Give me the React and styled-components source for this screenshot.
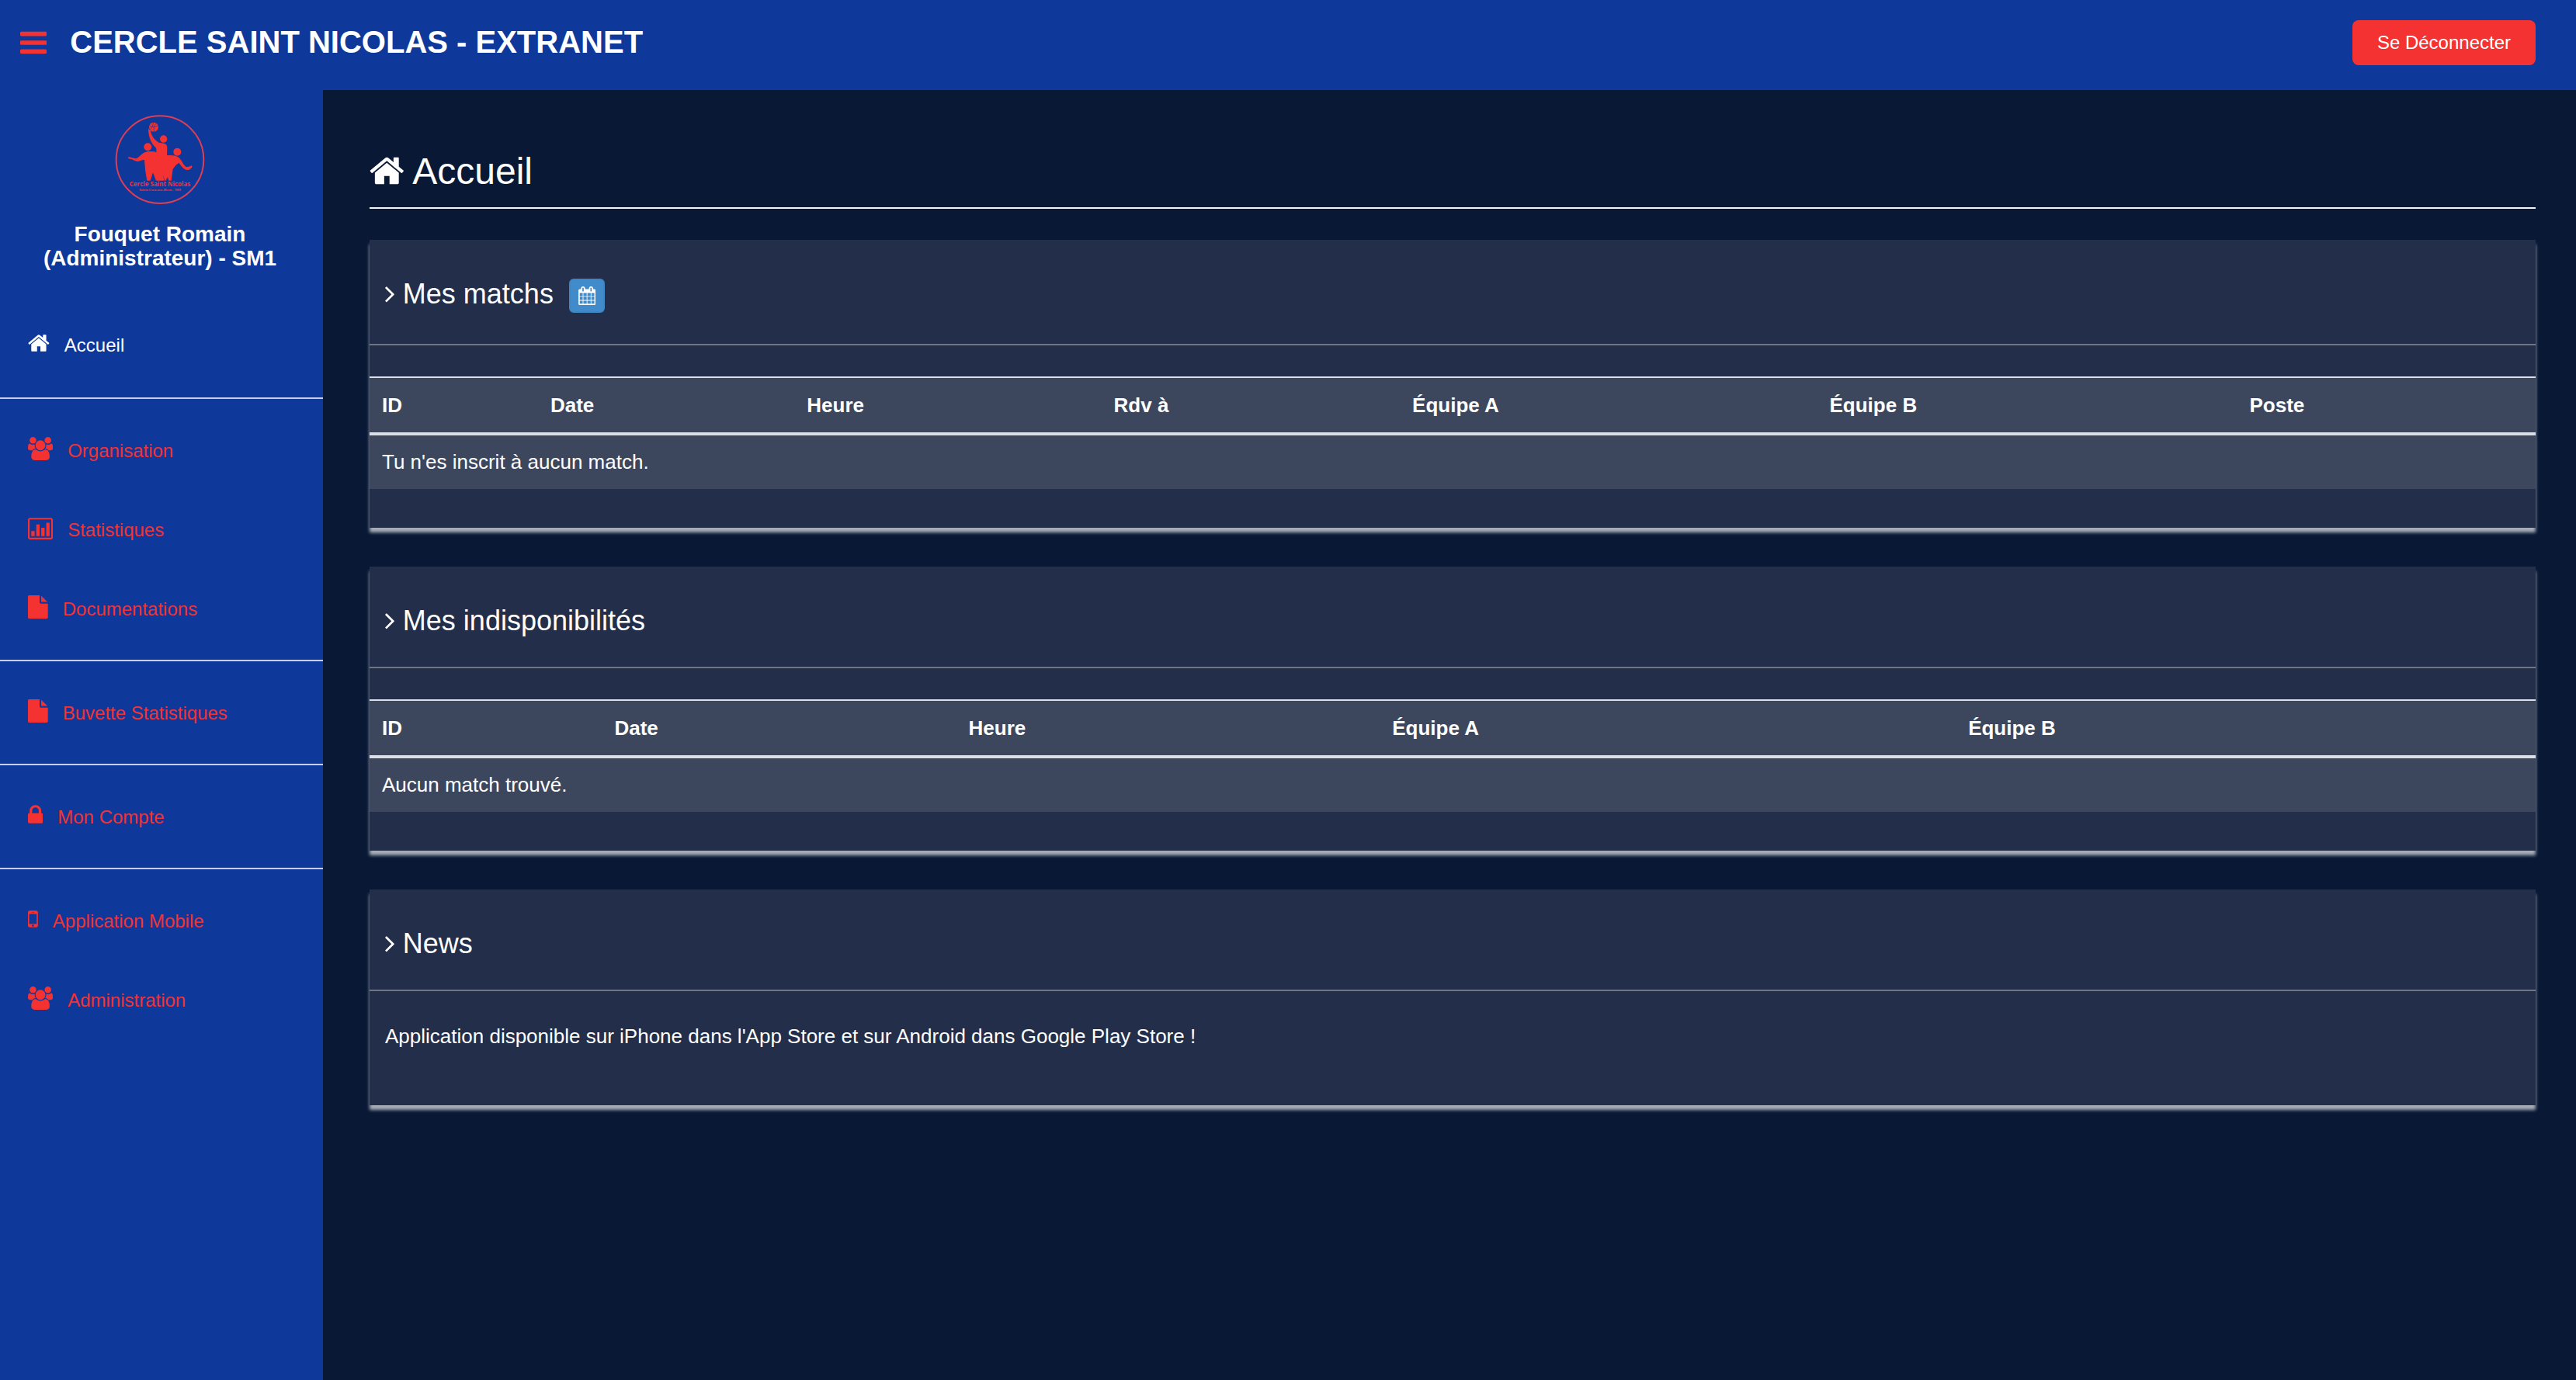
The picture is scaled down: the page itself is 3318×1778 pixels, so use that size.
import React from 'react'
import styled, { createGlobalStyle } from 'styled-components'

const icons = {
  bars: {
    x: 128, w: 1536,
    d: 'M1664 1344v128q0 26-19 45t-45 19h-1408q-26 0-45-19t-19-45v-128q0-26 19-45t45-19h1408q26 0 45 19t19 45zm0-512v128q0 26-19 45t-45 19h-1408q-26 0-45-19t-19-45v-128q0-26 19-45t45-19h1408q26 0 45 19t19 45zm0-512v128q0 26-19 45t-45 19h-1408q-26 0-45-19t-19-45v-128q0-26 19-45t45-19h1408q26 0 45 19t19 45z',
  },
  home: {
    x: 64, w: 1664,
    d: 'M1472 992v480q0 26-19 45t-45 19h-384v-384h-256v384h-384q-26 0-45-19t-19-45v-480q0-1 .5-3t.5-3l575-474 575 474q1 2 1 6zm223-69l-62 74q-8 9-21 11h-3q-13 0-21-7l-692-577-692 577q-12 8-24 7-13-2-21-11l-62-74q-8-10-7-23.5t11-21.5l719-599q32-26 76-26t76 26l244 204v-195q0-14 9-23t23-9h192q14 0 23 9t9 23v408l219 182q10 8 11 21.5t-7 23.5z',
  },
  users: {
    x: -64, w: 1920,
    d: 'M529 896q-162 5-265 128h-134q-82 0-138-40.5t-56-118.5q0-353 124-353 6 0 43.5 21t97.5 42.5 119 21.5q67 0 133-23-5 37-5 66 0 139 81 256zm1071 637q0 120-73 189.5t-194 69.5h-874q-121 0-194-69.5t-73-189.5q0-53 3.5-103.5t14-109 26.5-108.5 43-97.5 62-81 85.5-53.5 111.5-20q10 0 43 21.5t73 48 107 48 135 21.5 135-21.5 107-48 73-48 43-21.5q61 0 111.5 20t85.5 53.5 62 81 43 97.5 26.5 108.5 14 109 3.5 103.5zm-1024-1277q0 106-75 181t-181 75-181-75-75-181 75-181 181-75 181 75 75 181zm704 384q0 159-112.5 271.5t-271.5 112.5-271.5-112.5-112.5-271.5 112.5-271.5 271.5-112.5 271.5 112.5 112.5 271.5zm576 225q0 78-56 118.5t-138 40.5h-134q-103-123-265-128 81-117 81-256 0-29-5-66 66 23 133 23 59 0 119-21.5t97.5-42.5 43.5-21q124 0 124 353zm-128-609q0 106-75 181t-181 75-181-75-75-181 75-181 181-75 181 75 75 181z',
  },
  chart: {
    x: -64, w: 1920,
    d: 'M96 128h1600q66 0 113 47t47 113v1344q0 66-47 113t-113 47h-1600q-66 0-113-47t-47-113v-1344q0-66 47-113t113-47zm0 128q-32 0-32 32v1344q0 32 32 32h1600q32 0 32-32v-1344q0-32-32-32zm96 896h256v384h-256zm384-512h256v896h-256zm384 256h256v640h-256zm384-384h256v1024h-256z',
  },
  file: {
    x: 128, w: 1536,
    d: 'M1152 512v-472q22 14 36 28l408 408q14 14 28 36h-472zm-128 32q0 40 28 68t68 28h544v1056q0 40-28 68t-68 28h-1344q-40 0-68-28t-28-68v-1600q0-40 28-68t68-28h800v544z',
  },
  lock: {
    x: 320, w: 1152,
    d: 'M640 768h512v-192q0-106-75-181t-181-75-181 75-75 181v192zm832 96v576q0 40-28 68t-68 28h-960q-40 0-68-28t-28-68v-576q0-40 28-68t68-28h32v-192q0-184 132-316t316-132 316 132 132 316v192h32q40 0 68 28t28 68z',
  },
  mobile: {
    x: 512, w: 768,
    d: 'M976 1408q0-33-23.5-56.5t-56.5-23.5-56.5 23.5-23.5 56.5 23.5 56.5 56.5 23.5 56.5-23.5 23.5-56.5zm208-160v-704q0-13-9.5-22.5t-22.5-9.5h-512q-13 0-22.5 9.5t-9.5 22.5v704q0 13 9.5 22.5t22.5 9.5h512q13 0 22.5-9.5t9.5-22.5zm-192-848q0-16-16-16h-160q-16 0-16 16t16 16h160q16 0 16-16zm288-16v1024q0 52-38 90t-90 38h-512q-52 0-90-38t-38-90v-1024q0-52 38-90t90-38h512q52 0 90 38t38 90z',
  },
  angle: {
    x: 580, w: 640,
    d: 'M1171 960q0 13-10 23l-466 466q-10 10-23 10t-23-10l-50-50q-10-10-10-23t10-23l393-393-393-393q-10-10-10-23t10-23l50-50q10-10 23-10t23 10l466 466q10 10 10 23z',
  },
  calendar: {
    x: 64, w: 1664,
    d: 'M192 1664h288v-288h-288v288zm352 0h320v-288h-320v288zm-352-352h288v-320h-288v320zm352 0h320v-320h-320v320zm-352-384h288v-288h-288v288zm736 736h320v-288h-320v288zm-384-736h320v-288h-320v288zm768 736h288v-288h-288v288zm-384-352h320v-320h-320v320zm-352-864v-288q0-13-9.5-22.5t-22.5-9.5h-64q-13 0-22.5 9.5t-9.5 22.5v288q0 13 9.5 22.5t22.5 9.5h64q13 0 22.5-9.5t9.5-22.5zm736 864h288v-320h-288v320zm-384-384h320v-288h-320v288zm384 0h288v-288h-288v288zm32-480v-288q0-13-9.5-22.5t-22.5-9.5h-64q-13 0-22.5 9.5t-9.5 22.5v288q0 13 9.5 22.5t22.5 9.5h64q13 0 22.5-9.5t9.5-22.5zm384-64v1280q0 52-38 90t-90 38h-1408q-52 0-90-38t-38-90v-1280q0-52 38-90t90-38h128v-96q0-66 47-113t113-47h64q66 0 113 47t47 113v96h384v-96q0-66 47-113t113-47h64q66 0 113 47t47 113v96h128q52 0 90 38t38 90z',
  },
}

const menu = [
  [{ icon: 'home', label: 'Accueil', active: true }],
  [
    { icon: 'users', label: 'Organisation' },
    { icon: 'chart', label: 'Statistiques' },
    { icon: 'file', label: 'Documentations' },
  ],
  [{ icon: 'file', label: 'Buvette Statistiques' }],
  [{ icon: 'lock', label: 'Mon Compte' }],
  [
    { icon: 'mobile', label: 'Application Mobile' },
    { icon: 'users', label: 'Administration' },
  ],
]

function Icon({ name, size }) {
  const { x, w, d } = icons[name]
  return (
    <Glyph $size={size} viewBox={`${x} 0 ${w} 1792`} aria-hidden='true'>
      <path d={d} fillRule='evenodd' />
    </Glyph>
  )
}

function Logo() {
  return (
    <LogoSvg viewBox='48 30 360 360' role='img' aria-label='Logo du club'>
      <circle cx='228' cy='212' r='169' fill='none' stroke='#dc3f55' strokeWidth='6' />
      <circle cx='204' cy='86' r='18' />
      <g fill='none' stroke='#0e3899' strokeWidth='2'>
        <path d='M188 80Q204 92 221 80M190 97Q202 82 203 68M206 104Q200 86 214 71' />
      </g>
      <circle cx='242' cy='132' r='14' />
      <circle cx='181' cy='163' r='15' />
      <circle cx='295' cy='182' r='15' />
      <path d='M183 92L192 100C195 119 204 134 224 146L243 149Q256 152 256 165L255 200L214 200Q216 182 213 167C196 150 184 130 183 92z' />
      <path d='M106 201L130 207Q137 209 143 204C157 193 167 180 186 180L205 181Q218 183 226 195L248 196Q270 193 289 197Q302 201 309 213C317 226 322 237 332 241L344 238L351 234L352 242L341 251L330 252C318 247 309 235 301 224Q288 232 278 248L272 293L262 293L258 280L250 293L246 293L240 270L244 293L213 293L201 262L191 293L178 293Q170 255 168 213C158 212 151 219 140 219Q128 216 120 211L106 208z' />
      <LogoName x='228' y='316' textAnchor='middle'>Cercle Saint Nicolas</LogoName>
      <LogoTown x='228' y='332' textAnchor='middle'>Sainte-Croix-aux-Mines - 1909</LogoTown>
    </LogoSvg>
  )
}

function MatchTable({ columns, empty }) {
  return (
    <Table>
      <thead>
        <tr>
          {columns.map((c) => <Th key={c} scope='col'>{c}</Th>)}
        </tr>
      </thead>
      <tbody>
        <tr>
          <Td colSpan={columns.length}>{empty}</Td>
        </tr>
      </tbody>
    </Table>
  )
}

export default function App() {
  return (
    <>
      <GlobalStyle />
      <Page>
        <Header>
          <Toggle type='button' aria-label='Menu'><Icon name='bars' size={40} /></Toggle>
          <Brand href='#'>CERCLE SAINT NICOLAS - EXTRANET</Brand>
          <Logout type='button'>Se Déconnecter</Logout>
        </Header>
        <Body>
          <Sidebar>
            <Profile>
              <Logo />
              <UserName>Fouquet Romain (Administrateur) - SM1</UserName>
            </Profile>
            <nav>
              {menu.map((group, i) => (
                <Group key={i}>
                  {group.map((item) => (
                    <Item key={item.label} href='#' $active={item.active}>
                      <Icon name={item.icon} size={30} />
                      <Label>{item.label}</Label>
                    </Item>
                  ))}
                </Group>
              ))}
            </nav>
          </Sidebar>
          <Main>
            <Title><Icon name='home' size={48} /> Accueil</Title>
            <Panel>
              <PanelHead>
                <PanelTitle><Icon name='angle' size={36} /> Mes matchs</PanelTitle>
                <CalendarButton type='button' aria-label='Calendrier'>
                  <Icon name='calendar' size={24} />
                </CalendarButton>
              </PanelHead>
              <MatchTable
                columns={['ID', 'Date', 'Heure', 'Rdv à', 'Équipe A', 'Équipe B', 'Poste']}
                empty="Tu n'es inscrit à aucun match."
              />
            </Panel>
            <Panel>
              <PanelHead>
                <PanelTitle><Icon name='angle' size={36} /> Mes indisponibilités</PanelTitle>
              </PanelHead>
              <MatchTable
                columns={['ID', 'Date', 'Heure', 'Équipe A', 'Équipe B']}
                empty='Aucun match trouvé.'
              />
            </Panel>
            <Panel>
              <PanelHead>
                <PanelTitle><Icon name='angle' size={36} /> News</PanelTitle>
              </PanelHead>
              <News>Application disponible sur iPhone dans l'App Store et sur Android dans Google Play Store !</News>
            </Panel>
          </Main>
        </Body>
      </Page>
    </>
  )
}

const GlobalStyle = createGlobalStyle`
* {
  box-sizing: border-box;
}
body {
  margin: 0;
  background: #081835;
  color: #fff;
  font-family: 'Liberation Sans', Arial, sans-serif;
  font-size: 26px;
  line-height: 37px;
}
`;

const Glyph = styled.svg`
height: ${({ $size }) => $size}px;
width: auto;
fill: currentColor;
vertical-align: ${({ $size }) => -Math.round($size / 7)}px;
`;

const Page = styled.div`
min-height: 100vh;
display: flex;
flex-direction: column;
`;

const Header = styled.header`
display: flex;
align-items: flex-start;
height: 116px;
padding: 26px 52px 0 26px;
background: #0e3899;
`;

const Toggle = styled.button`
display: flex;
margin-top: 9px;
padding: 0;
border: none;
background: none;
color: #f53232;
cursor: pointer;
`;

const Brand = styled.a`
margin-left: 30px;
color: #fff;
font-size: 40px;
font-weight: 700;
line-height: 56px;
text-decoration: none;
`;

const Logout = styled.button`
margin-left: auto;
height: 58px;
padding: 0 32px;
border: none;
border-radius: 8px;
background: #f53232;
color: #fff;
font-family: inherit;
font-size: 24px;
cursor: pointer;
`;

const Body = styled.div`
flex: 1;
display: flex;
`;

const Sidebar = styled.aside`
flex: none;
width: 416px;
background: #0e3899;
`;

const Profile = styled.div`
display: flex;
flex-direction: column;
align-items: center;
height: 277px;
padding: 29px 44px 0 40px;
`;

const LogoSvg = styled.svg`
width: 120px;
height: 120px;
fill: #f53232;
`;

const LogoName = styled.text`
font-family: 'Open Sans', sans-serif;
font-size: 24px;
font-weight: 700;
`;

const LogoTown = styled.text`
font-family: 'Open Sans', sans-serif;
font-size: 11px;
font-weight: 700;
`;

const UserName = styled.h1`
margin: 21px 0 0;
font-size: 28px;
font-weight: 700;
line-height: 31px;
text-align: center;
`;

const Group = styled.div`
& + & {
  padding-top: 15px;
  border-top: 2px solid #c7cde2;
}
&:not(:last-child) {
  padding-bottom: 15px;
}
`;

const Item = styled.a`
display: block;
padding: ${({ $active }) => ($active ? '34px 36px' : '34px 36px 32px')};
color: ${({ $active }) => ($active ? '#fff' : '#f53232')};
font-size: 24px;
line-height: 36px;
text-decoration: none;
`;

const Label = styled.span`
margin-left: 19px;
`;

const Main = styled.main`
flex: 1;
min-width: 0;
padding: 72px 52px 50px 60px;
`;

const Title = styled.h2`
margin: 0 0 40px;
padding-bottom: 13px;
border-bottom: 2px solid #f2f4ff;
font-size: 48px;
font-weight: 400;
line-height: 66px;
`;

const Panel = styled.section`
margin-bottom: 50px;
padding-bottom: 50px;
background: #232f4a;
box-shadow: 0 6px 4px rgba(255, 255, 255, 0.65);
`;

const PanelHead = styled.div`
display: flex;
align-items: flex-start;
gap: 20px;
margin-bottom: 40px;
padding: 49px 20px 38px;
border-bottom: 2px solid #707680;
`;

const PanelTitle = styled.h3`
margin: 0;
font-size: 36px;
font-weight: 400;
line-height: 42px;
`;

const CalendarButton = styled.button`
display: flex;
align-items: center;
justify-content: center;
width: 46px;
height: 44px;
margin: 1px 0 2px;
padding: 0;
border: 2px solid #3f86c4;
border-radius: 6px;
background: #428bca;
color: #fff;
cursor: pointer;
`;

const Table = styled.table`
width: 100%;
border-collapse: separate;
border-spacing: 0;
background: #3c475e;
`;

const Th = styled.th`
padding: 17px 16px 16px;
border-top: 2px solid #dadfea;
border-bottom: 4px solid #dadee6;
font-weight: 700;
text-align: left;
`;

const Td = styled.td`
padding: 16px;
`;

const News = styled.p`
margin: 0;
padding: 0 20px 20px;
`;
